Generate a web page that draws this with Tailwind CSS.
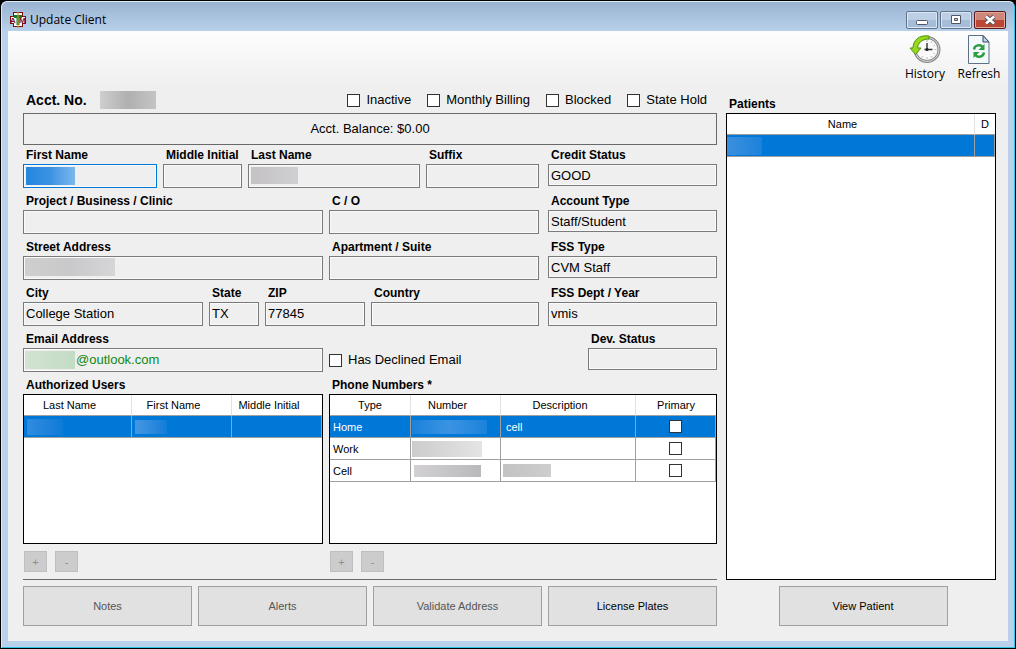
<!DOCTYPE html>
<html lang="en">
  <head>
    <meta charset="UTF-8" />
    <meta name="viewport" content="width=device-width, initial-scale=1.0" />
    <title>Update Client</title>
    <script src="https://cdn.jsdelivr.net/npm/@tailwindcss/browser@4"></script>
  </head>
  <body class="bg-black font-['Liberation_Sans',Arial,sans-serif] text-black">
    <div class="min-h-screen flex flex-col p-px">
      <div class="flex-1 flex flex-col rounded-t-md border border-t-[#dfe9f4] border-l-[#dfe9f4] border-r-[#2cc4e4] border-b-[#2cc4e4] bg-[#b9d1ea] px-1.5 pb-1.5">
        <!-- title bar -->
        <header class="h-[29px] -mx-1.5 px-2 flex items-center justify-between bg-linear-to-b from-[#9ab3d1] to-[#b8d0e9] rounded-t-md">
          <div class="flex items-center gap-1 pt-1.5">
            <svg class="size-4" viewBox="0 0 16 16">
              <path d="M3 0h10v4h3v8h-3v3H3v-3H0V4h3z" fill="#7d0d12" />
              <path d="M4 1h8v4h3v6h-3v3H4v-3H1V5h3z" fill="#fff" />
              <text x="0" y="11" font-size="8" font-weight="bold" fill="#7d0d12">A</text>
              <text x="9" y="11" font-size="8" font-weight="bold" fill="#7d0d12">M</text>
              <path d="M4 3h8v3H9.5v7h-3V6H4z" fill="#1c7a2b" />
              <path d="M8 0v16" stroke="#c49a22" stroke-width="1.2" />
            </svg>
            <h1 class="font-['Open_Sans','Noto_Sans',sans-serif] text-[12px] leading-4">Update Client</h1>
          </div>
          <div class="flex gap-0.5 pt-1.5">
            <button type="button" aria-label="Minimize" class="w-8 h-[18px] rounded-xs border border-[#5f738c] shadow-[inset_0_0_0_1px_#dce8f5] bg-linear-to-b from-[#bccfe5] from-50% to-[#a6bdd9] to-50% flex items-center justify-center">
              <svg class="w-3 h-3" viewBox="0 0 12 12"><rect x="0.5" y="6.5" width="11" height="4" rx="1" fill="#fff" stroke="#535666" /></svg>
            </button>
            <button type="button" aria-label="Maximize" class="w-8 h-[18px] rounded-xs border border-[#5f738c] shadow-[inset_0_0_0_1px_#dce8f5] bg-linear-to-b from-[#bccfe5] from-50% to-[#a6bdd9] to-50% flex items-center justify-center">
              <svg class="w-3 h-3" viewBox="0 0 12 12"><path d="M1.5 1.5h9v8h-9zM4.5 4.500v2h3v-2z" fill="#fff" fill-rule="evenodd" stroke="#535666" /></svg>
            </button>
            <button type="button" aria-label="Close" class="w-8 h-[18px] rounded-xs border border-[#5a1a1a] shadow-[inset_0_0_0_1px_#e3a79b] bg-linear-to-b from-[#d08678] from-50% to-[#bb4634] to-50% flex items-center justify-center">
              <svg class="w-3.5 h-3" viewBox="0 0 14 12">
                <path d="M3 2.500l8 7M11 2.500l-8 7" stroke="#535666" stroke-width="4.5" />
                <path d="M3 2.500l8 7M11 2.500l-8 7" stroke="#fff" stroke-width="2.5" />
              </svg>
            </button>
          </div>
        </header>

        <main class="flex-1 flex flex-col bg-[#efefef] pb-[15px]">
          <!-- toolbar -->
          <nav class="h-14 pt-1 pr-[9px] flex justify-end gap-3 bg-linear-to-b from-[#fdfdfd] to-[#efefef] font-['Open_Sans','Noto_Sans',sans-serif] text-[12px] leading-4">
            <button type="button" class="w-11 flex flex-col items-center">
              <svg class="w-8 h-[31px] shrink-0" viewBox="0 0 32 31">
                <circle cx="18" cy="14.5" r="12" fill="#fafafa" stroke="#8a8a8a" stroke-width="3" />
                <circle cx="18" cy="14.5" r="12" fill="none" stroke="#d8d8d8" stroke-width="1" />
                <path d="M18 5v2M18 22v2M8.5 14.5h2M25.5 14.5h2M26 10l-1.500 1M26 19l-1.500-1M23 22.500l-1-1.500M13 22.500l1-1.500M23 6.500l-1 1.500" stroke="#b5b5b5" />
                <path d="M18 8v7.500M15.500 14.500h8" stroke="#333" stroke-width="1.4" />
                <circle cx="18" cy="14.5" r="1.6" fill="#222" />
                <path d="M20 1C10-.5 4 5.500 4 13H1l5.500 6.500L12 13H8.500C9 8 13 4 20 4z" fill="#96d91c" stroke="#4f9210" />
              </svg>
              History
            </button>
            <button type="button" class="w-10 flex flex-col items-center">
              <svg class="w-6 h-[31px] shrink-0" viewBox="0 0 24 31">
                <path d="M1.500.5H16l6 6.500v21.500H1.500z" fill="#f3f8fd" stroke="#5d7186" />
                <path d="M16 .5V7h6z" fill="#c3d6ea" stroke="#34495e" />
                <path d="M7 14.500c.5-4.500 6.500-5.500 8.500-2.500" fill="none" stroke="#2c9c40" stroke-width="2.4" />
                <path d="M17.500 9v6h-6z" fill="#2c9c40" />
                <path d="M17 17.500c-.5 4.500-6.500 5.500-8.500 2.500" fill="none" stroke="#2c9c40" stroke-width="2.4" />
                <path d="M6.500 23v-6h6z" fill="#2c9c40" />
              </svg>
              Refresh
            </button>
          </nav>

          <div class="flex-1 grid grid-cols-[694fr_270fr] gap-x-[9px] gap-y-1.5 grid-rows-[1fr_auto] pl-[15px] pr-3">
            <!-- client details -->
            <section class="flex flex-col min-w-0 border-b border-[#696969] pb-[7px]">
              <div class="h-[26px] flex items-center justify-between pl-[3px] pr-2.5">
                <div class="flex items-center gap-[13px]">
                  <h2 class="text-[14px] font-bold">Acct. No.</h2>
                  <span class="w-14 h-[18px] bg-linear-to-r from-[#cfcfcf] via-[#b0b0b0] to-[#c4c4c4]"></span>
                </div>
                <div class="flex gap-4 text-[13px] leading-4">
                  <label class="flex items-center gap-1.5"><input type="checkbox" class="appearance-none size-[13px] border border-[#333] bg-white" />Inactive</label>
                  <label class="flex items-center gap-1.5"><input type="checkbox" class="appearance-none size-[13px] border border-[#333] bg-white" />Monthly Billing</label>
                  <label class="flex items-center gap-1.5"><input type="checkbox" class="appearance-none size-[13px] border border-[#333] bg-white" />Blocked</label>
                  <label class="flex items-center gap-1.5"><input type="checkbox" class="appearance-none size-[13px] border border-[#333] bg-white" />State Hold</label>
                </div>
              </div>
              <p class="h-8 border border-[#696969] flex items-center justify-center text-[13px]">Acct. Balance: $0.00</p>

              <div class="mt-px flex gap-[9px]">
                <div class="flex-[516] min-w-0 flex flex-col gap-1">
                  <div class="grid grid-cols-[134fr_79fr_172fr_113fr] gap-1.5">
                    <div class="relative min-w-0">
                      <label for="first_name" class="block pl-[3px] text-[12px] leading-[18px] font-bold whitespace-nowrap">First Name</label>
                      <input type="text" id="first_name" class="block w-full h-6 px-0.5 text-[13px] border border-[#0078d7] shadow-[inset_0_0_0_1px_#fafafa]" />
                      <span class="absolute left-[3px] bottom-[3px] w-[49px] h-[18px] bg-linear-to-r from-[#2487e0] via-[#3a93e2] to-[#7db7ec]"></span>
                    </div>
                    <div class="min-w-0">
                      <label for="middle_initial" class="block pl-[3px] text-[12px] leading-[18px] font-bold whitespace-nowrap">Middle Initial</label>
                      <input type="text" id="middle_initial" class="block w-full h-6 px-0.5 text-[13px] border border-[#7a7a7a] shadow-[inset_0_0_0_1px_#fafafa]" />
                    </div>
                    <div class="relative min-w-0">
                      <label for="last_name" class="block pl-[3px] text-[12px] leading-[18px] font-bold whitespace-nowrap">Last Name</label>
                      <input type="text" id="last_name" class="block w-full h-6 px-0.5 text-[13px] border border-[#7a7a7a] shadow-[inset_0_0_0_1px_#fafafa]" />
                      <span class="absolute left-[3px] bottom-1 w-[47px] h-[17px] bg-linear-to-r from-[#c4c2c4] to-[#cfced0]"></span>
                    </div>
                    <div class="min-w-0">
                      <label for="suffix" class="block pl-[3px] text-[12px] leading-[18px] font-bold whitespace-nowrap">Suffix</label>
                      <input type="text" id="suffix" class="block w-full h-6 px-0.5 text-[13px] border border-[#7a7a7a] shadow-[inset_0_0_0_1px_#fafafa]" />
                    </div>
                  </div>

                  <div class="grid grid-cols-[300fr_210fr] gap-1.5">
                    <div class="min-w-0">
                      <label for="business" class="block pl-[3px] text-[12px] leading-[18px] font-bold whitespace-nowrap">Project / Business / Clinic</label>
                      <input type="text" id="business" class="block w-full h-6 px-0.5 text-[13px] border border-[#7a7a7a] shadow-[inset_0_0_0_1px_#fafafa]" />
                    </div>
                    <div class="min-w-0">
                      <label for="care_of" class="block pl-[3px] text-[12px] leading-[18px] font-bold whitespace-nowrap">C / O</label>
                      <input type="text" id="care_of" class="block w-full h-6 px-0.5 text-[13px] border border-[#7a7a7a] shadow-[inset_0_0_0_1px_#fafafa]" />
                    </div>
                  </div>

                  <div class="grid grid-cols-[300fr_210fr] gap-1.5">
                    <div class="relative min-w-0">
                      <label for="street" class="block pl-[3px] text-[12px] leading-[18px] font-bold whitespace-nowrap">Street Address</label>
                      <input type="text" id="street" class="block w-full h-6 px-0.5 text-[13px] border border-[#7a7a7a] shadow-[inset_0_0_0_1px_#fafafa]" />
                      <span class="absolute left-0.5 bottom-1 w-[90px] h-[18px] bg-linear-to-r from-[#cfcfcf] via-[#c9c8ca] to-[#d6d5d7]"></span>
                    </div>
                    <div class="min-w-0">
                      <label for="apartment" class="block pl-[3px] text-[12px] leading-[18px] font-bold whitespace-nowrap">Apartment / Suite</label>
                      <input type="text" id="apartment" class="block w-full h-6 px-0.5 text-[13px] border border-[#7a7a7a] shadow-[inset_0_0_0_1px_#fafafa]" />
                    </div>
                  </div>

                  <div class="grid grid-cols-[180fr_50fr_100fr_168fr] gap-1.5">
                    <div class="min-w-0">
                      <label for="city" class="block pl-[3px] text-[12px] leading-[18px] font-bold whitespace-nowrap">City</label>
                      <input type="text" id="city" value="College Station" class="block w-full h-6 px-0.5 pb-0.5 text-[13px] border border-[#7a7a7a] shadow-[inset_0_0_0_1px_#fafafa]" />
                    </div>
                    <div class="min-w-0">
                      <label for="state" class="block pl-[3px] text-[12px] leading-[18px] font-bold whitespace-nowrap">State</label>
                      <input type="text" id="state" value="TX" class="block w-full h-6 px-0.5 pb-0.5 text-[13px] border border-[#7a7a7a] shadow-[inset_0_0_0_1px_#fafafa]" />
                    </div>
                    <div class="min-w-0">
                      <label for="zip" class="block pl-[3px] text-[12px] leading-[18px] font-bold whitespace-nowrap">ZIP</label>
                      <input type="text" id="zip" value="77845" class="block w-full h-6 px-0.5 pb-0.5 text-[13px] border border-[#7a7a7a] shadow-[inset_0_0_0_1px_#fafafa]" />
                    </div>
                    <div class="min-w-0">
                      <label for="country" class="block pl-[3px] text-[12px] leading-[18px] font-bold whitespace-nowrap">Country</label>
                      <input type="text" id="country" class="block w-full h-6 px-0.5 text-[13px] border border-[#7a7a7a] shadow-[inset_0_0_0_1px_#fafafa]" />
                    </div>
                  </div>

                  <div class="grid grid-cols-[300fr_210fr] gap-1.5">
                    <div class="relative min-w-0">
                      <label for="email" class="block pl-[3px] text-[12px] leading-[18px] font-bold whitespace-nowrap">Email Address</label>
                      <input type="text" id="email" value="@outlook.com" class="block w-full h-6 pl-[52px] pr-0.5 pb-0.5 text-[13px] text-[#118811] border border-[#7a7a7a] shadow-[inset_0_0_0_1px_#fafafa]" />
                      <span class="absolute left-0.5 bottom-[3px] w-[50px] h-[18px] bg-linear-to-r from-[#d3e2d3] to-[#c2dcc5]"></span>
                    </div>
                    <label class="flex items-center gap-1.5 h-6 self-end text-[13px]"><input type="checkbox" class="appearance-none size-[13px] border border-[#333] bg-white" />Has Declined Email</label>
                  </div>
                </div>

                <!-- status column -->
                <div class="flex-[169] min-w-0 flex flex-col gap-1">
                  <div class="h-[42px]">
                    <label for="credit_status" class="block pl-[3px] text-[12px] leading-[18px] font-bold whitespace-nowrap">Credit Status</label>
                    <input type="text" id="credit_status" value="GOOD" class="block w-full h-[22px] px-0.5 text-[13px] border border-[#7a7a7a] shadow-[inset_0_0_0_1px_#fafafa]" />
                  </div>
                  <div class="h-[42px]">
                    <label for="account_type" class="block pl-[3px] text-[12px] leading-[18px] font-bold whitespace-nowrap">Account Type</label>
                    <input type="text" id="account_type" value="Staff/Student" class="block w-full h-[22px] px-0.5 text-[13px] border border-[#7a7a7a] shadow-[inset_0_0_0_1px_#fafafa]" />
                  </div>
                  <div class="h-[42px]">
                    <label for="fss_type" class="block pl-[3px] text-[12px] leading-[18px] font-bold whitespace-nowrap">FSS Type</label>
                    <input type="text" id="fss_type" value="CVM Staff" class="block w-full h-[22px] px-0.5 text-[13px] border border-[#7a7a7a] shadow-[inset_0_0_0_1px_#fafafa]" />
                  </div>
                  <div class="h-[42px]">
                    <label for="fss_dept" class="block pl-[3px] text-[12px] leading-[18px] font-bold whitespace-nowrap">FSS Dept / Year</label>
                    <input type="text" id="fss_dept" value="vmis" class="block w-full h-6 px-0.5 pb-0.5 text-[13px] border border-[#7a7a7a] shadow-[inset_0_0_0_1px_#fafafa]" />
                  </div>
                  <div class="h-[42px] pl-10">
                    <label for="dev_status" class="block pl-[3px] text-[12px] leading-[18px] font-bold whitespace-nowrap">Dev. Status</label>
                    <input type="text" id="dev_status" class="block w-full h-[22px] px-0.5 text-[13px] border border-[#7a7a7a] shadow-[inset_0_0_0_1px_#fafafa]" />
                  </div>
                </div>
              </div>

              <div class="flex-1 mt-1 grid grid-cols-[300fr_388fr] gap-1.5">
                <div class="flex flex-col min-w-0">
                  <h3 class="pl-[3px] text-[12px] leading-[18px] font-bold">Authorized Users</h3>
                  <div class="flex-1 border border-black bg-white">
                    <table class="w-full table-fixed border-separate border-spacing-0 text-[11px] leading-4">
                      <colgroup>
                        <col class="w-[108px]" />
                        <col class="w-[100px]" />
                        <col />
                      </colgroup>
                      <thead>
                        <tr class="h-[21px]">
                          <th class="p-0 pr-4 font-normal border-r border-r-[#e2e2e2] border-b border-b-[#a0a0a0]">Last Name</th>
                          <th class="p-0 pr-4 font-normal border-r border-r-[#e2e2e2] border-b border-b-[#a0a0a0]">First Name</th>
                          <th class="p-0 pr-4 font-normal border-b border-b-[#a0a0a0]">Middle Initial</th>
                        </tr>
                      </thead>
                      <tbody>
                        <tr class="h-[22px] bg-[#0078d7] text-white">
                          <td class="p-0 pl-[3px] border-r border-b border-[#a0a0a0]"><span class="block w-9 h-4 bg-linear-to-r from-[#2f8bdf] to-[#0b7bd8]"></span></td>
                          <td class="p-0 pl-[3px] border-r border-b border-[#a0a0a0]"><span class="block w-8 h-3.5 bg-linear-to-r from-[#4397e3] to-[#0f7dd8]"></span></td>
                          <td class="p-0 border-r border-b border-[#a0a0a0]"></td>
                        </tr>
                      </tbody>
                    </table>
                  </div>
                  <div class="mt-[7px] pl-px flex gap-2 text-[11px] leading-4">
                    <button type="button" disabled class="w-[23px] h-[21px] border border-[#bfbfbf] bg-[#ccc] text-[#8e8e8e]">+</button>
                    <button type="button" disabled class="w-[23px] h-[21px] border border-[#bfbfbf] bg-[#ccc] text-[#8e8e8e]">-</button>
                  </div>
                </div>

                <div class="flex flex-col min-w-0">
                  <h3 class="pl-[3px] text-[12px] leading-[18px] font-bold">Phone Numbers *</h3>
                  <div class="flex-1 border border-black bg-white">
                    <table class="w-full table-fixed border-separate border-spacing-0 text-[11px] leading-4">
                      <colgroup>
                        <col class="w-[81px]" />
                        <col class="w-[90px]" />
                        <col class="w-[135px]" />
                        <col />
                      </colgroup>
                      <thead>
                        <tr class="h-[21px]">
                          <th class="p-0 font-normal border-r border-r-[#e2e2e2] border-b border-b-[#a0a0a0]">Type</th>
                          <th class="p-0 pr-4 font-normal border-r border-r-[#e2e2e2] border-b border-b-[#a0a0a0]">Number</th>
                          <th class="p-0 pr-4 font-normal border-r border-r-[#e2e2e2] border-b border-b-[#a0a0a0]">Description</th>
                          <th class="p-0 font-normal border-b border-b-[#a0a0a0]">Primary</th>
                        </tr>
                      </thead>
                      <tbody>
                        <tr class="h-[22px] bg-[#0078d7] text-white">
                          <td class="p-0 pl-[3px] border-r border-b border-[#a0a0a0]">Home</td>
                          <td class="p-0 pl-px border-r border-b border-[#a0a0a0]"><span class="block w-[75px] h-3.5 bg-linear-to-r from-[#1a82db] via-[#3a93e2] to-[#1a82db]"></span></td>
                          <td class="p-0 pl-[5px] border-r border-b border-[#a0a0a0]">cell</td>
                          <td class="p-0 border-r border-b border-[#a0a0a0]"><input type="checkbox" aria-label="Home is primary" class="block mx-auto appearance-none size-[13px] border border-[#333] bg-white" /></td>
                        </tr>
                        <tr class="h-[22px]">
                          <td class="p-0 pl-[3px] border-r border-b border-[#a0a0a0]">Work</td>
                          <td class="p-0 pl-px border-r border-b border-[#a0a0a0]"><span class="block w-[70px] h-4 bg-linear-to-r from-[#cdcccd] to-[#e4e4e5]"></span></td>
                          <td class="p-0 border-r border-b border-[#a0a0a0]"></td>
                          <td class="p-0 border-r border-b border-[#a0a0a0]"><input type="checkbox" aria-label="Work is primary" class="block mx-auto appearance-none size-[13px] border border-[#333] bg-white" /></td>
                        </tr>
                        <tr class="h-[22px]">
                          <td class="p-0 pl-[3px] border-r border-b border-[#a0a0a0]">Cell</td>
                          <td class="p-0 pl-[3px] border-r border-b border-[#a0a0a0]"><span class="block w-[67px] h-3 bg-linear-to-r from-[#d2d0d2] to-[#b9b9bb]"></span></td>
                          <td class="p-0 pl-0.5 border-r border-b border-[#a0a0a0]"><span class="block w-12 h-[13px] bg-linear-to-r from-[#c3c3c3] to-[#cecdcf]"></span></td>
                          <td class="p-0 border-r border-b border-[#a0a0a0]"><input type="checkbox" aria-label="Cell is primary" class="block mx-auto appearance-none size-[13px] border border-[#333] bg-white" /></td>
                        </tr>
                      </tbody>
                    </table>
                  </div>
                  <div class="mt-[7px] pl-px flex gap-2 text-[11px] leading-4">
                    <button type="button" disabled class="w-[23px] h-[21px] border border-[#bfbfbf] bg-[#ccc] text-[#8e8e8e]">+</button>
                    <button type="button" disabled class="w-[23px] h-[21px] border border-[#bfbfbf] bg-[#ccc] text-[#8e8e8e]">-</button>
                  </div>
                </div>
              </div>
            </section>

            <!-- patients -->
            <section class="flex flex-col min-w-0 pt-2">
              <h3 class="pl-[3px] text-[12px] leading-[18px] font-bold">Patients</h3>
              <div class="flex-1 border border-black bg-white">
                <table class="w-full table-fixed border-separate border-spacing-0 text-[11px] leading-4">
                  <colgroup>
                    <col />
                    <col class="w-5" />
                  </colgroup>
                  <thead>
                    <tr class="h-[21px]">
                      <th class="p-0 pr-4 font-normal border-r border-r-[#e2e2e2] border-b border-b-[#a0a0a0]">Name</th>
                      <th class="p-0 font-normal border-b border-b-[#a0a0a0]">D</th>
                    </tr>
                  </thead>
                  <tbody>
                    <tr class="h-[22px] bg-[#0078d7] text-white">
                      <td class="p-0 border-r border-b border-[#a0a0a0]"><span class="block w-[35px] h-[18px] bg-linear-to-r from-[#3a90df] to-[#1a82db]"></span></td>
                      <td class="p-0 border-r border-b border-[#a0a0a0]"></td>
                    </tr>
                  </tbody>
                </table>
              </div>
            </section>

            <div class="grid grid-cols-4 gap-1.5 text-[11px] leading-4">
              <button type="button" disabled class="h-10 border border-[#a0a0a0] bg-[#e1e1e1] text-[#555]">Notes</button>
              <button type="button" disabled class="h-10 border border-[#a0a0a0] bg-[#e1e1e1] text-[#555]">Alerts</button>
              <button type="button" disabled class="h-10 border border-[#a0a0a0] bg-[#e1e1e1] text-[#555]">Validate Address</button>
              <button type="button" class="h-10 border border-[#a0a0a0] bg-[#e1e1e1]">License Plates</button>
            </div>
            <div class="pl-1 flex justify-center text-[11px] leading-4">
              <button type="button" class="w-[169px] h-10 border border-[#a0a0a0] bg-[#e1e1e1]">View Patient</button>
            </div>
          </div>
        </main>
      </div>
    </div>
  </body>
</html>
